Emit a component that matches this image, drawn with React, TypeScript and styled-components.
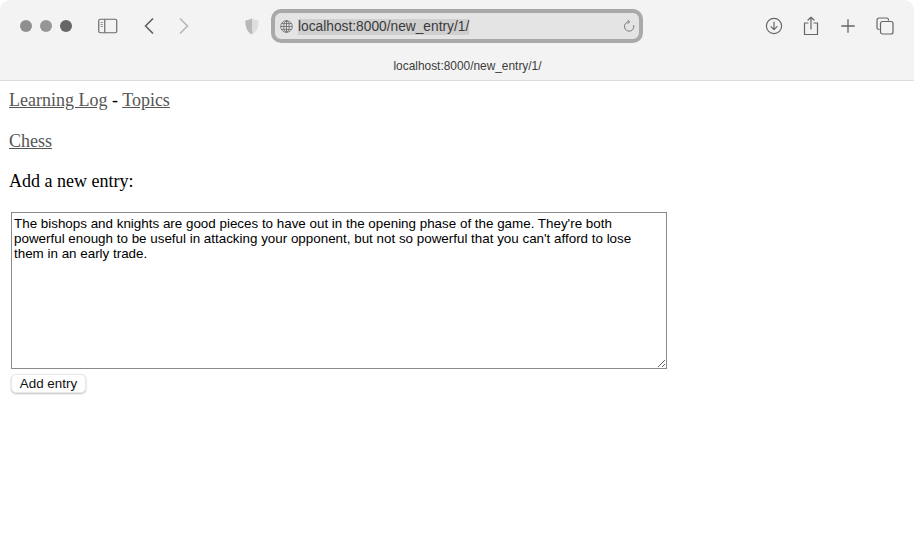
import styled, { createGlobalStyle } from "styled-components";

const GlobalStyle = createGlobalStyle`
  html, body {
    margin: 0;
    padding: 0;
    background: #fff;
  }
`;

const ENTRY_TEXT = "The bishops and knights are good pieces to have out in the opening phase of the game. They're both powerful enough to be useful in attacking your opponent, but not so powerful that you can't afford to lose them in an early trade.";

export default function App() {
  return <>
    <GlobalStyle />
    <Window>
      <Toolbar>
        <MainRow>
          <Lights>
            <Light shade="#8f8f8f" />
            <Light shade="#969696" />
            <Light shade="#666666" />
          </Lights>
          <SidebarButton>
            <svg width="20" height="16" viewBox="0 0 20 16" fill="none" stroke="#6a6a6a">
              <rect x="0.75" y="1.25" width="18" height="13.5" rx="1.5" strokeWidth="1.2" />
              <path d="M6.75 1.5V14.5" strokeWidth="1.2" />
              <path d="M2.5 4.5H5M2.5 6.5H5M2.5 8.5H5" strokeWidth="1" stroke="#9a9a9a" />
            </svg>
          </SidebarButton>
          <BackButton>
            <svg width="10" height="16" viewBox="0 0 10 16" fill="none" stroke="#606060" strokeWidth="1.7" strokeLinecap="round" strokeLinejoin="round">
              <path d="M8.5 1L1.5 8L8.5 15" />
            </svg>
          </BackButton>
          <ForwardButton>
            <svg width="10" height="16" viewBox="0 0 10 16" fill="none" stroke="#b8b8b8" strokeWidth="1.7" strokeLinecap="round" strokeLinejoin="round">
              <path d="M1.5 1L8.5 8L1.5 15" />
            </svg>
          </ForwardButton>
          <ShieldSlot>
            <svg width="14" height="17" viewBox="0 0 14 17">
              <path d="M7 0.5C9 1.6 11 2.2 13.5 2.4C13.8 8.5 12 13.8 7 16.5C2 13.8 0.2 8.5 0.5 2.4C3 2.2 5 1.6 7 0.5Z" fill="#dedede" />
              <path d="M7 0.5C5 1.6 3 2.2 0.5 2.4C0.2 8.5 2 13.8 7 16.5Z" fill="#b8b8b8" />
            </svg>
          </ShieldSlot>
          <AddressBar>
            <svg width="13" height="13" viewBox="0 0 13 13" fill="none" stroke="#666" strokeWidth="0.8">
              <circle cx="6.5" cy="6.5" r="5.8" />
              <ellipse cx="6.5" cy="6.5" rx="2.7" ry="5.8" />
              <path d="M6.5 0.7V12.3M0.7 6.5H12.3M1.5 3.6H11.5M1.5 9.4H11.5" />
            </svg>
            <SelectedUrl>localhost:8000/new_entry/1/</SelectedUrl>
            <ReloadIcon>
              <svg width="12" height="14" viewBox="0 0 12 14" fill="none" stroke="#7a7a7a" strokeWidth="1">
                <path d="M6 2.8A4.7 4.7 0 1 0 10.6 6" />
                <path d="M4.6 0.8L6.6 2.8L4.6 4.8" />
              </svg>
            </ReloadIcon>
          </AddressBar>
          <Actions>
            <ActionSlot>
              <svg width="18" height="18" viewBox="0 0 18 18" fill="none" stroke="#666" strokeWidth="1.2" strokeLinecap="round" strokeLinejoin="round">
                <circle cx="9" cy="9" r="7.6" />
                <path d="M9 5V12.5M6 9.7L9 12.7L12 9.7" />
              </svg>
            </ActionSlot>
            <ActionSlot>
              <svg width="16" height="20" viewBox="0 0 16 20" fill="none" stroke="#666" strokeWidth="1.2" strokeLinecap="round" strokeLinejoin="round">
                <path d="M5 7H1.5V18.5H14.5V7H11" />
                <path d="M8 13V1.2M5 4L8 1.2L11 4" />
              </svg>
            </ActionSlot>
            <ActionSlot>
              <svg width="14" height="14" viewBox="0 0 14 14" fill="none" stroke="#666" strokeWidth="1.3" strokeLinecap="round">
                <path d="M7 0.7V13.3M0.7 7H13.3" />
              </svg>
            </ActionSlot>
            <ActionSlot>
              <svg width="18" height="18" viewBox="0 0 18 18" fill="none" stroke="#666" strokeWidth="1.2">
                <path d="M3.5 12.5H3A2 2 0 0 1 1 10.5V3A2 2 0 0 1 3 1H10.5A2 2 0 0 1 12.5 3V3.5" />
                <rect x="4.5" y="4.5" width="12.5" height="12.5" rx="2" />
              </svg>
            </ActionSlot>
          </Actions>
        </MainRow>
        <TabTitle>localhost:8000/new_entry/1/</TabTitle>
      </Toolbar>
      <Page>
        <TitleLine><PageLink href="#">Learning Log</PageLink> - <PageLink href="#">Topics</PageLink></TitleLine>
        <TitleLine><PageLink href="#">Chess</PageLink></TitleLine>
        <TitleLine>Add a new entry:</TitleLine>
        <EntryForm>
          <EntryText defaultValue={ENTRY_TEXT} />
          <SubmitButton type="button">Add entry</SubmitButton>
        </EntryForm>
      </Page>
    </Window>
  </>;
}

const Window = styled.div`
  width: 914px;
  height: 537px;
  overflow: hidden;
  background: #fff;
`;

const Toolbar = styled.header`
  height: 80px;
  background: #f3f3f3;
  border-bottom: 1px solid #dcdcdc;
  border-radius: 10px 10px 0 0;
  display: flex;
  flex-direction: column;
`;

const MainRow = styled.div`
  height: 52px;
  display: flex;
  align-items: center;
  padding-left: 20px;
`;

const Lights = styled.div`
  display: flex;
  gap: 8px;
`;

const Light = styled.span<{ shade: string }>`
  width: 12px;
  height: 12px;
  border-radius: 50%;
  background: ${p => p.shade};
`;

const SidebarButton = styled.div`
  display: flex;
  margin-left: 26px;
`;

const BackButton = styled.div`
  display: flex;
  margin-left: 26px;
`;

const ForwardButton = styled.div`
  display: flex;
  margin-left: 25px;
`;

const ShieldSlot = styled.div`
  display: flex;
  margin-left: 56px;
`;

const AddressBar = styled.div`
  box-sizing: border-box;
  width: 372px;
  height: 34px;
  margin-left: 12px;
  padding: 0 4px 0 5px;
  display: flex;
  align-items: center;
  gap: 5px;
  background: #e4e4e4;
  border: 4px solid #a9a9a9;
  border-radius: 10px;
`;

const SelectedUrl = styled.span`
  margin-top: 1px;
  font: 13.76px/16px "Liberation Sans", Arial, sans-serif;
  color: #3a3a3a;
  background: #cfcfcf;
`;

const ReloadIcon = styled.span`
  display: flex;
  margin-left: auto;
`;

const Actions = styled.div`
  display: grid;
  grid-template-columns: repeat(4, 37px);
  margin-left: 112px;
`;

const ActionSlot = styled.div`
  display: flex;
  align-items: center;
  justify-content: center;
`;

const TabTitle = styled.div`
  text-align: center;
  font: 11.9px/14px "Liberation Sans", Arial, sans-serif;
  color: #3c3c3c;
  padding: 7px 0 0 21px;
`;

const Page = styled.main`
  padding: 9px 9px 0;
  font: 18px/21px "Liberation Serif", "Times New Roman", serif;
  color: #000;
`;

const TitleLine = styled.p`
  margin: 0 0 19.5px;
`;

const PageLink = styled.a`
  color: #555;
  text-decoration: underline;
`;

const EntryForm = styled.form`
  display: flex;
  flex-direction: column;
  align-items: flex-start;
  padding-left: 2px;
  margin-top: 9.5px;
`;

const EntryText = styled.textarea`
  box-sizing: border-box;
  width: 656px;
  height: 157px;
  margin: 0;
  padding: 3px 2px;
  border: 1px solid #8a8a8a;
  font: 13.4px/15px "Liberation Sans", Arial, sans-serif;
  color: #000;
  background: #fff;
  outline: none;
`;

const SubmitButton = styled.button`
  box-sizing: border-box;
  width: 75px;
  height: 19px;
  margin: 5px 0 0;
  padding: 0;
  border: 1px solid #e8e8e8;
  border-radius: 5px;
  background: #fff;
  box-shadow: 0 1px 2px rgba(0, 0, 0, 0.25);
  font: 13.4px/17px "Liberation Sans", Arial, sans-serif;
  color: #111;
`;
